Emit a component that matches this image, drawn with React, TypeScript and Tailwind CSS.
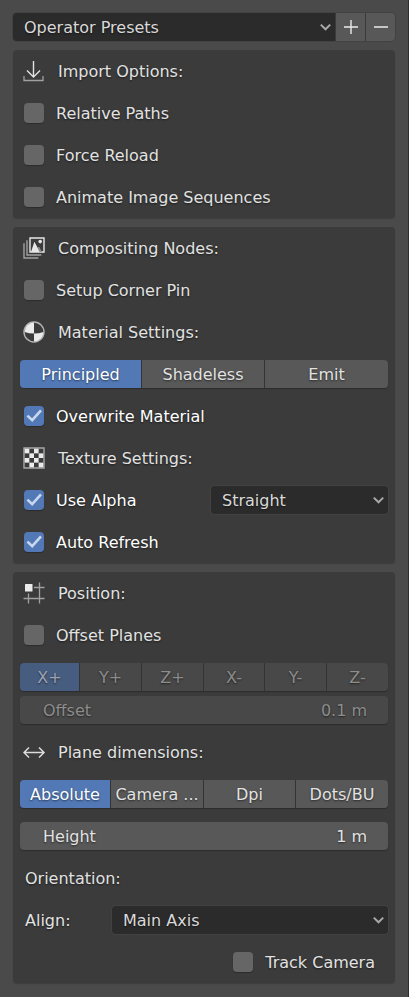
import { useState, type ReactNode } from "react";

const shadow = "[text-shadow:0_1px_2px_rgba(0,0,0,0.55)]";

function Chevron() {
  return (
    <svg
      className="pointer-events-none col-start-1 row-start-1 mr-1 self-center justify-self-end"
      width="11"
      height="8"
      viewBox="0 0 11 8"
      fill="none"
      stroke="#a8a8a8"
      strokeWidth="2"
      aria-hidden="true"
    >
      <path d="M0.8 1.6 5.5 6.3 10.2 1.6" />
    </svg>
  );
}

function Dropdown({
  id,
  label,
  options,
  className,
}: {
  id: string;
  label?: string;
  options: string[];
  className: string;
}) {
  return (
    <div className={`grid h-7 min-w-0 bg-[#2b2b2b] ${className}`}>
      <select
        id={id}
        aria-label={label}
        className={`col-start-1 row-start-1 h-7 w-full appearance-none bg-transparent pt-px pr-6 pl-[11px] text-[#d9d9d9] ${shadow}`}
      >
        {options.map((o) => (
          <option key={o}>{o}</option>
        ))}
      </select>
      <Chevron />
    </div>
  );
}

function Panel({ children }: { children: ReactNode }) {
  return (
    <section className="rounded bg-[#3b3b3b] px-[7px] shadow-[0_1px_1px_rgba(0,0,0,0.18)]">
      {children}
    </section>
  );
}

function Row({ children }: { children: ReactNode }) {
  return <div className="flex h-[42px] items-center">{children}</div>;
}

function Heading({ icon, children }: { icon: ReactNode; children: ReactNode }) {
  return (
    <Row>
      <h2 className="flex items-center gap-3 pl-[3px]">
        <svg width="23" height="22" viewBox="0 0 23 22" fill="none" aria-hidden="true">
          {icon}
        </svg>
        <span className="pt-0.5">{children}</span>
      </h2>
    </Row>
  );
}

function Check({ label, initial = false }: { label: string; initial?: boolean }) {
  const [on, setOn] = useState(initial);
  return (
    <label className={`flex items-center gap-3 pl-1 ${on ? "text-white" : ""}`}>
      <span className="grid">
        <input
          type="checkbox"
          checked={on}
          onChange={() => setOn(!on)}
          className="col-start-1 row-start-1 size-5 appearance-none rounded bg-[#666666] shadow-[0_1px_1px_rgba(0,0,0,0.25)] checked:bg-[#5279b6]"
        />
        {on && (
          <svg
            className="pointer-events-none col-start-1 row-start-1"
            width="20"
            height="20"
            viewBox="0 0 20 20"
            fill="none"
            stroke="#c9d7ee"
            strokeWidth="2.6"
            aria-hidden="true"
          >
            <path d="M3.4 9.6 8.2 14.2 17 4.4" />
          </svg>
        )}
      </span>
      <span className="pt-0.5">{label}</span>
    </label>
  );
}

function Segments({
  name,
  legend,
  options,
  columns,
  disabled = false,
}: {
  name: string;
  legend: string;
  options: string[];
  columns: string;
  disabled?: boolean;
}) {
  const [value, setValue] = useState(options[0]);
  const tone = disabled
    ? "bg-[#484848] text-[#8c8c8c] has-checked:bg-[#475d80] has-checked:text-[#9ba3b0]"
    : "bg-[#585858] has-checked:bg-[#5279b6] has-checked:text-white";
  return (
    <fieldset
      disabled={disabled}
      aria-label={legend}
      className={`grid h-7 w-full gap-px overflow-hidden rounded bg-[#343434] shadow-[0_1px_1px_rgba(0,0,0,0.25)] ${columns}`}
    >
      {options.map((o) => (
        <label
          key={o}
          className={`relative flex min-w-0 items-center justify-center pt-0.5 leading-6 whitespace-nowrap ${tone}`}
        >
          <input
            type="radio"
            name={name}
            value={o}
            checked={value === o}
            onChange={() => setValue(o)}
            className="sr-only"
          />
          {o}
        </label>
      ))}
    </fieldset>
  );
}

function NumberField({
  id,
  label,
  value,
  disabled = false,
}: {
  id: string;
  label: string;
  value: string;
  disabled?: boolean;
}) {
  const tone = disabled ? "bg-[#484848] text-[#8c8c8c]" : "bg-[#585858]";
  return (
    <div
      className={`flex h-7 w-full items-center rounded pr-[21px] pl-[23px] shadow-[0_1px_1px_rgba(0,0,0,0.25)] ${tone}`}
    >
      <label htmlFor={id} className="pt-0.5">{label}</label>
      <input
        id={id}
        defaultValue={value}
        disabled={disabled}
        className={`h-7 min-w-0 flex-1 bg-transparent pt-0.5 text-right ${shadow}`}
      />
    </div>
  );
}

const importIcon = (
  <>
    <path d="M10.5 1V17M4 10.5 10.5 17 17 10.5" stroke="#e2e2e2" strokeWidth="1.4" />
    <path d="M1 16V20.5H20V16" stroke="#a0a0a0" strokeWidth="1.3" />
  </>
);

const imagesIcon = (
  <>
    <path d="M1 6.3V21H15.3" stroke="#a0a0a0" strokeWidth="1.4" />
    <path d="M4 3.3V18H18.3" stroke="#a0a0a0" strokeWidth="1.4" />
    <path d="M7 1H21V15H7Z" stroke="#e6e6e6" strokeWidth="1.4" />
    <path d="M8 15 11.4 4.7 17 15Z" fill="#e6e6e6" />
    <path d="M14.5 10.5 16.2 9.8 19 15H16.5Z" fill="#8c8c8c" />
    <circle cx="17.2" cy="4.6" r="1.8" fill="#e6e6e6" />
  </>
);

const materialIcon = (
  <>
    <circle cx="11" cy="11" r="10" stroke="#b4b4b4" strokeWidth="1.4" />
    <path d="M11 12.5V1.5A9.5 9.5 0 0 0 1.6 11Q6 12.5 11 12.5Z" fill="#ebebeb" />
    <path d="M11 12.5V20.5A9.5 9.5 0 0 0 20.4 11Q16 12.5 11 12.5Z" fill="#ebebeb" />
  </>
);

const cells = [0, 1, 2, 3].flatMap((r) =>
  [0, 1, 2, 3].filter((c) => (r + c) % 2 === 0).map((c) => ({ r, c }))
);

const textureIcon = (
  <>
    <path d="M1 1H21V21H1Z" stroke="#a8a8a8" strokeWidth="1.4" />
    {cells.map(({ r, c }) => (
      <rect
        key={`${r}-${c}`}
        x={1.7 + c * 4.65}
        y={1.7 + r * 4.65}
        width="4.65"
        height="4.65"
        fill="#ebebeb"
      />
    ))}
  </>
);

const positionIcon = (
  <>
    <path d="M11 5.5H21.5M16.5 0.5V21.5M5.5 11.5V21.5M0.5 16.5H21.5" stroke="#a0a0a0" strokeWidth="1.3" />
    <rect x="2" y="2" width="7.5" height="7.5" rx="0.5" fill="#ebebeb" />
  </>
);

const widthIcon = (
  <path d="M1 11.5H21M6 6.5 1 11.5 6 16.5M16 6.5 21 11.5 16 16.5" stroke="#dcdcdc" strokeWidth="1.5" />
);

export default function App() {
  const square =
    "flex h-7 w-[29px] items-center justify-center bg-[#585858] pb-px";
  return (
    <main
      className={`flex min-h-screen flex-col gap-[9px] border-r border-[#2e2e2e] bg-[#4a4a4a] p-[13px] pb-[14px] font-['DejaVu_Sans',sans-serif] text-base leading-7 text-[#e2e2e2] ${shadow}`}
    >
      <div className="flex h-7 gap-px overflow-hidden rounded bg-[#3b3b3b] shadow-[0_0_0_1px_rgba(0,0,0,0.1)]">
        <Dropdown id="presets" label="Presets" options={["Operator Presets"]} className="flex-1" />
        <button type="button" aria-label="Add preset" className={square}>
          <svg width="14" height="14" viewBox="0 0 14 14" stroke="#ebebeb" strokeWidth="1.4" aria-hidden="true">
            <path d="M7 0V14M0 7H14" />
          </svg>
        </button>
        <button type="button" aria-label="Remove preset" className={square}>
          <svg width="14" height="14" viewBox="0 0 14 14" stroke="#ebebeb" strokeWidth="1.4" aria-hidden="true">
            <path d="M0 7H14" />
          </svg>
        </button>
      </div>

      <Panel>
        <Heading icon={importIcon}>Import Options:</Heading>
        <Row><Check label="Relative Paths" /></Row>
        <Row><Check label="Force Reload" /></Row>
        <Row><Check label="Animate Image Sequences" /></Row>
      </Panel>

      <Panel>
        <Heading icon={imagesIcon}>Compositing Nodes:</Heading>
        <Row><Check label="Setup Corner Pin" /></Row>
        <Heading icon={materialIcon}>Material Settings:</Heading>
        <Row>
          <Segments
            name="shader"
            legend="Shader"
            options={["Principled", "Shadeless", "Emit"]}
            columns="grid-cols-[121fr_122fr_123fr]"
          />
        </Row>
        <Row><Check label="Overwrite Material" initial /></Row>
        <Heading icon={textureIcon}>Texture Settings:</Heading>
        <div className="grid grid-cols-2 items-center gap-[14px]">
          <Row><Check label="Use Alpha" initial /></Row>
          <Dropdown
            id="alpha"
            label="Alpha mode"
            options={["Straight", "Premultiplied"]}
            className="rounded shadow-[0_0_0_1px_#424242]"
          />
        </div>
        <Row><Check label="Auto Refresh" initial /></Row>
      </Panel>

      <Panel>
        <Heading icon={positionIcon}>Position:</Heading>
        <Row><Check label="Offset Planes" /></Row>
        <div className="flex flex-col gap-[5px] py-[7px]">
          <Segments
            name="axis"
            legend="Offset direction"
            options={["X+", "Y+", "Z+", "X-", "Y-", "Z-"]}
            columns="grid-cols-[59fr_61fr_61fr_60fr_61fr_61fr]"
            disabled
          />
          <NumberField id="offset" label="Offset" value="0.1 m" disabled />
        </div>
        <Heading icon={widthIcon}>Plane dimensions:</Heading>
        <Row>
          <Segments
            name="size"
            legend="Plane dimensions"
            options={["Absolute", "Camera ...", "Dpi", "Dots/BU"]}
            columns="grid-cols-[90fr_92fr_91fr_92fr]"
          />
        </Row>
        <Row><NumberField id="height" label="Height" value="1 m" /></Row>
        <Row><h2 className="pt-0.5 pl-[5px]">Orientation:</h2></Row>
        <Row>
          <label htmlFor="align" className="w-1/4 shrink-0 pt-0.5 pl-[5px]">Align:</label>
          <Dropdown
            id="align"
            options={["Main Axis", "Face Camera"]}
            className="flex-1 rounded shadow-[0_0_0_1px_#424242]"
          />
        </Row>
        <div className="flex justify-end pr-[13px]">
          <Row><Check label="Track Camera" /></Row>
        </div>
      </Panel>
    </main>
  );
}
